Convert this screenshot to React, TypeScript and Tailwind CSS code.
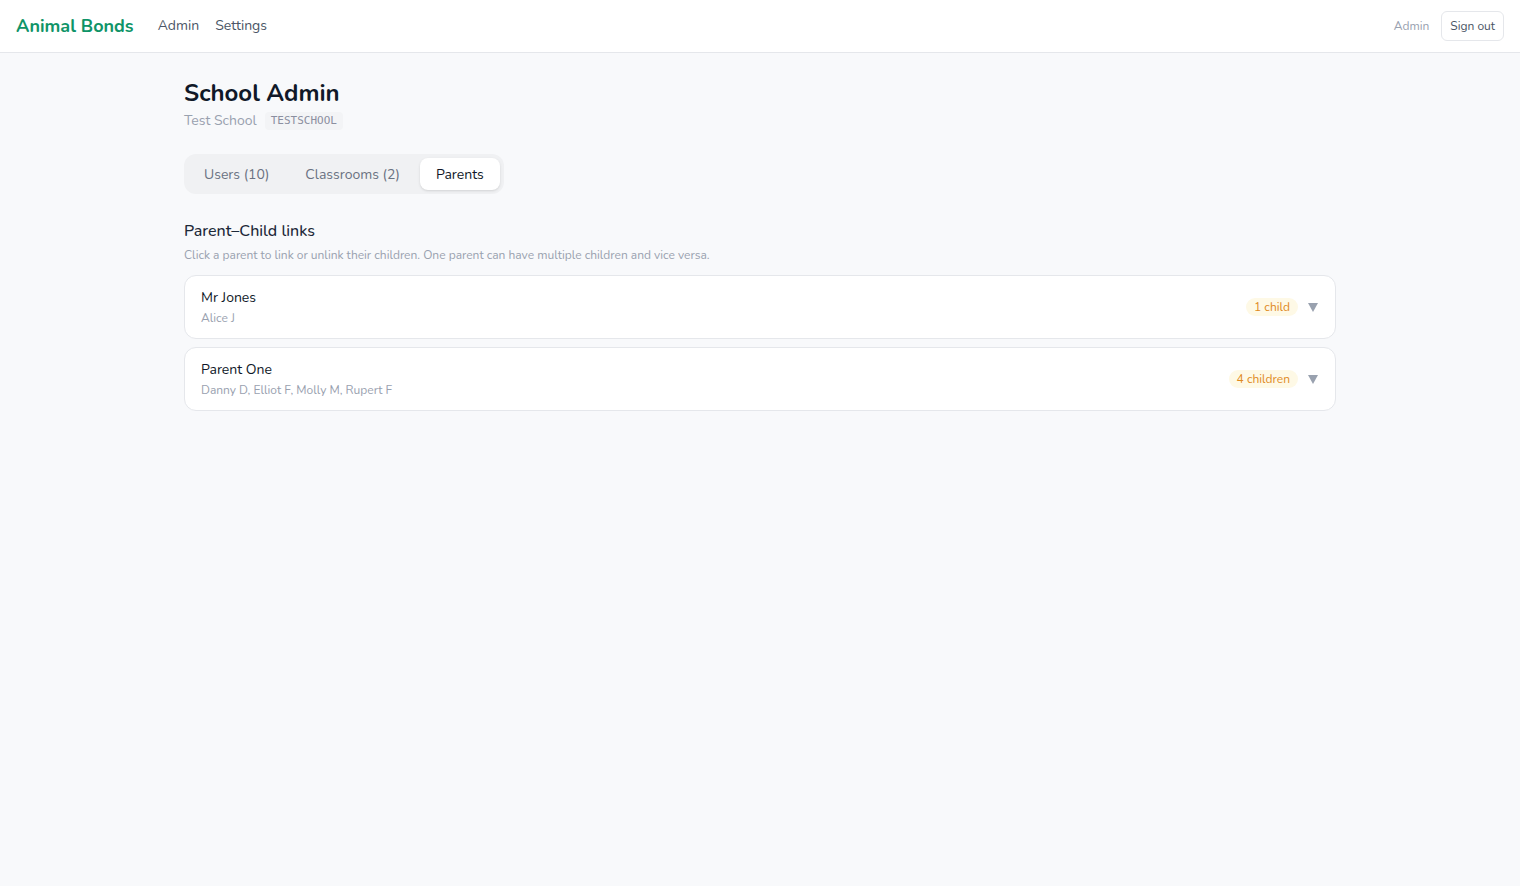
import { useState } from "react";

interface Parent {
  id: string;
  name: string;
  children: string[];
}

const parents: Parent[] = [
  { id: "p1", name: "Mr Jones", children: ["Alice J"] },
  { id: "p2", name: "Parent One", children: ["Danny D", "Elliot F", "Molly M", "Rupert F"] },
];

export default function App() {
  const [tab, setTab] = useState("parents");
  const [open, setOpen] = useState<string | null>(null);

  const tabs = [
    { key: "users", label: "Users (10)" },
    { key: "classrooms", label: "Classrooms (2)" },
    { key: "parents", label: "Parents" },
  ];

  return (
    <div className="min-h-screen bg-[#f8f9fb] text-gray-900 font-['Nunito','Lato','Noto_Sans',sans-serif]">
      {/* header */}
      <header className="h-[53px] bg-white border-b border-gray-200 flex items-center justify-between px-4">
        <div className="flex items-center gap-6">
          <span className="text-[18px] font-bold text-[#0f9468]">Animal Bonds</span>
          <nav className="flex items-center gap-4 text-[14px] text-gray-600 -mt-[1px]">
            <a>Admin</a>
            <a>Settings</a>
          </nav>
        </div>
        <div className="flex items-center gap-3">
          <span className="text-[12px] text-gray-400">Admin</span>
          <button className="text-[12px] text-gray-600 border border-gray-200 rounded-md px-2 py-[5px] bg-white">
            Sign out
          </button>
        </div>
      </header>

      <main className="max-w-6xl mx-auto pt-[24px]">
        <h1 className="text-[24px] font-bold leading-8 text-gray-900">School Admin</h1>
        <div className="flex items-center gap-2 mt-[1px]">
          <span className="text-[14px] text-gray-400">Test School</span>
          <span className="text-[11px] leading-[18px] font-['DejaVu_Sans_Mono',monospace] text-[#8b8fa0] bg-gray-100 rounded px-1.5">
            TESTSCHOOL
          </span>
        </div>

        {/* tabs */}
        <div className="inline-flex items-center gap-1 bg-[#f0f1f3] rounded-xl p-1 mt-[23px]">
          {tabs.map((t) => (
            <button
              key={t.key}
              onClick={() => setTab(t.key)}
              className={`text-[14px] px-4 h-8 rounded-lg ${
                tab === t.key ? "bg-white text-gray-900 shadow-sm" : "text-gray-500"
              }`}
            >
              {t.label}
            </button>
          ))}
        </div>

        <h2 className="text-[16px] font-medium text-gray-800 mt-[25px]">Parent–Child links</h2>
        <p className="text-[12px] text-gray-400 mt-[3px]">
          Click a parent to link or unlink their children. One parent can have multiple children and vice versa.
        </p>

        <div className="flex flex-col gap-2 mt-[11px]">
          {parents.map((p) => (
            <div
              key={p.id}
              onClick={() => setOpen(open === p.id ? null : p.id)}
              className="bg-white border border-gray-200 rounded-xl h-16 px-4 flex items-center justify-between cursor-pointer"
            >
              <div>
                <p className="text-[14px] text-gray-900">{p.name}</p>
                <p className="text-[12px] text-gray-400 mt-[1px]">{p.children.join(", ")}</p>
              </div>
              <div className="flex items-center gap-2.5">
                <span className="text-[12px] leading-[18px] text-[#e08a1e] bg-[#fef9e6] rounded-full px-2">
                  {p.children.length} {p.children.length === 1 ? "child" : "children"}
                </span>
                <svg width="10" height="9" viewBox="0 0 10 9" className="text-gray-400 mr-[1px]">
                  <path d="M0 0 H10 L5 9 Z" fill="currentColor" />
                </svg>
              </div>
            </div>
          ))}
        </div>
      </main>
    </div>
  );
}
